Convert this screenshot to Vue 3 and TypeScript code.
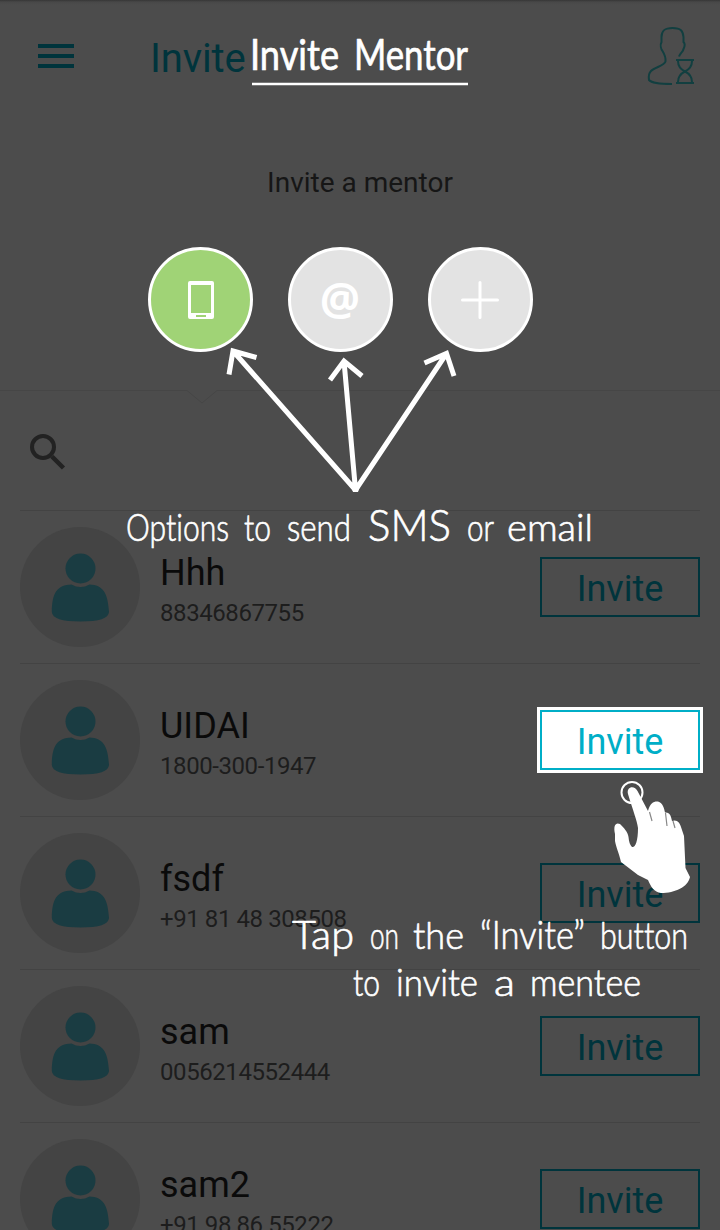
<script setup lang="ts">
interface Contact {
  name: string
  phone: string
  highlighted?: boolean
}
interface Word {
  text: string
  x: number
  y: number
  width: number
  size: number
  bold?: boolean
}

const contacts: Contact[] = [
  { name: 'Hhh', phone: '88346867755' },
  { name: 'UIDAI', phone: '1800-300-1947', highlighted: true },
  { name: 'fsdf', phone: '+91 81 48 308508' },
  { name: 'sam', phone: '0056214552444' },
  { name: 'sam2', phone: '+91 98 86 55222' },
]

const words: Word[] = [
  { text: 'Invite', x: 250, y: 70, width: 89, size: 42, bold: true },
  { text: 'Mentor', x: 354, y: 70, width: 114, size: 42, bold: true },
  { text: 'Options', x: 126, y: 541, width: 103, size: 38 },
  { text: 'to', x: 244, y: 541, width: 27, size: 38 },
  { text: 'send', x: 287, y: 541, width: 64, size: 38 },
  { text: 'SMS', x: 368, y: 541, width: 83, size: 44 },
  { text: 'or', x: 467, y: 541, width: 27, size: 38 },
  { text: 'email', x: 507, y: 541, width: 86, size: 38 },
  { text: 'Tap', x: 292, y: 949, width: 62, size: 39 },
  { text: 'on', x: 370, y: 949, width: 29, size: 38 },
  { text: 'the', x: 413, y: 949, width: 51, size: 38 },
  { text: '“Invite”', x: 480, y: 949, width: 105, size: 40 },
  { text: 'button', x: 600, y: 949, width: 88, size: 38 },
  { text: 'to', x: 353, y: 996, width: 27, size: 38 },
  { text: 'invite', x: 396, y: 996, width: 82, size: 38 },
  { text: 'a', x: 494, y: 996, width: 21, size: 38 },
  { text: 'mentee', x: 530, y: 996, width: 111, size: 38 },
]
</script>

<template>
  <main class="screen">
    <header class="topbar">
      <div class="menu"><i></i><i></i><i></i></div>
      <h1>Invite</h1>
      <svg class="pending" width="50" height="62" viewBox="646 26 50 62">
        <path d="M679 56.500C680 53 683 52 683.500 49C685 46 684.500 43 683.500 42V37C683 31 681 28 672.500 28C664 28 661.500 31 661.500 37V42C660 45 661 49 662.500 51C665 55 666 57 665.500 61.500C664 66 655 67 651 71C648 74 648.500 77 649 80C652 83.500 662 84 672 84" />
        <path d="M676 60H694M676 83H694M678 61C678 67 681 69.500 685 71.500C689 69.500 692 67 692 61M678 82C678 76 681 73.500 685 71.500C689 73.500 692 76 692 82" />
      </svg>
    </header>

    <section class="options">
      <p>Invite a mentor</p>
      <div class="circles">
        <div class="circle active">
          <svg width="26" height="38" viewBox="0 0 26 38">
            <path fill="#fff" fill-rule="evenodd" d="M2 0H24Q26 0 26 2V36Q26 38 24 38H2Q0 38 0 36V2Q0 0 2 0ZM3 4V32H23V4ZM8 34V36H18V34Z" />
          </svg>
        </div>
        <div class="circle"><span class="at">@</span></div>
        <div class="circle">
          <svg width="38" height="38" viewBox="0 0 38 38">
            <path d="M19 1.500V36.500M1.500 19H36.500" stroke="#fff" stroke-width="3" stroke-linecap="round" />
          </svg>
        </div>
      </div>
      <svg class="notch" width="720" height="16" viewBox="0 0 720 16">
        <path d="M0 .5H187L202 13L217 .5H720" fill="none" stroke="#464646" />
      </svg>
    </section>

    <div class="search">
      <svg width="36" height="36" viewBox="0 0 36 36">
        <circle cx="13" cy="13" r="11" fill="none" stroke="#222" stroke-width="4" />
        <path d="M22 22.500L33.500 34" stroke="#222" stroke-width="4.500" />
      </svg>
    </div>

    <ul class="contacts">
      <li v-for="c in contacts" :key="c.name">
        <div class="avatar">
          <svg width="58" height="70" viewBox="0 0 58 70">
            <circle cx="29.500" cy="15.500" r="15" />
            <path d="M20.500 31.500Q29.500 36.500 38.500 31.500C52 32 57 40 58 59Q57.500 68.500 29.500 68.500T.8 59C1 40 6 32 20.500 31.500Z" />
          </svg>
        </div>
        <div class="who">
          <strong>{{ c.name }}</strong>
          <span>{{ c.phone }}</span>
        </div>
        <button :class="{ highlighted: c.highlighted }" type="button">Invite</button>
      </li>
    </ul>

    <svg class="guide" width="720" height="1230" viewBox="0 0 720 1230">
      <path class="rule" d="M252 84H468" />
      <path class="arrows" d="M355.500 490L233 351M229 374.500L233 351L256.500 357.500M355.500 490L344 361M330 380L344 361L362 376M355.500 490L446.500 353.500M424.500 363L446.500 353.500L454 376" />
      <path fill="#fff" d="M351 486L360 486L358 492H353Z" />
      <text
        v-for="(w, i) in words"
        :key="i"
        :x="w.x"
        :y="w.y"
        :font-size="w.size"
        :textLength="w.width"
        :class="{ bold: w.bold }"
        lengthAdjust="spacingAndGlyphs"
      >{{ w.text }}</text>
      <g>
        <circle cx="632" cy="792.500" r="10.500" fill="none" stroke="#fff" stroke-width="2" />
        <path fill="#fff" d="M628 794C626 786 635 785 637.500 791L648 811C650 803 654 801 658 801.500C663 803 664 808 665 812.500C670 812 671 816 672 821C677 819 680 823 681 827L684 836L685.500 868L690 877C688 887 675 893 661 893C654 892 651 887 648 880L638 875L621 862C619 853 616 847 615 841V834C613 825 616 822 620 824C624 828 628 832 628.500 837C629 842 630 845 632 847C635 848 638 842 638 828C637 820 633 811 628 794Z" />
        <path d="M649.500 812L652 821M665.500 813L667 826M673 821L675 828" fill="none" stroke="#888" stroke-width="1.200" />
      </g>
    </svg>
  </main>
</template>

<style>
body { margin: 0; }
</style>

<style scoped>
.screen {
  position: relative;
  box-sizing: border-box;
  width: 720px;
  height: 1230px;
  overflow: hidden;
  background: linear-gradient(#363636, #484848 2px, #4c4c4c 5px);
  font-family: Roboto, "Liberation Sans", sans-serif;
}
.topbar { display: flex; height: 114px; box-sizing: border-box; padding: 26px 24px 0 38px; }
.menu { display: grid; width: 36px; height: 24px; margin-top: 18px; align-content: space-between; }
.menu i { height: 4px; background: #00343c; }
h1 { margin: 9px 0 0 76px; font-size: 40px; line-height: 48px; font-weight: 400; letter-spacing: -.15px; color: #00343c; }
.pending { margin-left: auto; fill: none; stroke: #123f40; stroke-width: 2; }
.options { height: 276px; box-sizing: border-box; padding-top: 51px; }
.options p { margin: 0; font-size: 28px; line-height: 36px; text-align: center; color: #161616; }
.circles { display: flex; gap: 35px; margin: 46px 0 0 147.500px; }
.circle {
  display: flex;
  align-items: center;
  justify-content: center;
  box-sizing: border-box;
  width: 105px;
  height: 105px;
  border: 3px solid #fff;
  border-radius: 50%;
  background: #e3e3e3;
}
.circle.active { background: #a0d376; }
.circle.active svg { margin-left: 2px; }
.circle svg { display: block; }
.at { margin-top: -3px; color: #fff; font: 700 45px/44px "Open Sans", sans-serif; }
.notch { display: block; margin-top: 38px; }
.search { height: 120px; box-sizing: border-box; padding: 44px 0 0 30px; }
.contacts { margin: 0 20px; padding: 0; list-style: none; }
li { display: flex; height: 153px; box-sizing: border-box; border-top: 1px solid #434343; padding-top: 16px; }
.avatar { display: flex; justify-content: center; width: 120px; height: 120px; border-radius: 50%; background: #444; }
.avatar svg { margin: 26px 0 0; fill: #1a3c42; }
.who { display: flex; flex-direction: column; margin: 25px 0 0 20px; }
.who strong { font-size: 36px; line-height: 43px; font-weight: 400; color: #0a0a0a; }
.who span { margin-top: 3px; font-size: 24px; line-height: 30px; letter-spacing: -.42px; color: #1d1d1d; }
button {
  width: 160px;
  height: 60px;
  box-sizing: border-box;
  margin: 30px 0 0 auto;
  padding: 4px 0 0;
  border: 2px solid #00343c;
  background: transparent;
  color: #00343c;
  font: 400 36px/52px Roboto, sans-serif;
}
button.highlighted { border-color: #00aec7; background: #fff; color: #00aec7; box-shadow: 0 0 0 3px #fff; }
.guide { position: absolute; inset: 0; }
.guide text { fill: #fff; font-family: Lato, "Open Sans", sans-serif; font-weight: 300; font-variant-ligatures: none; stroke: #fff; stroke-width: .7px; stroke-linejoin: round; }
.guide text.bold { font-weight: 400; }
.rule { stroke: #fff; stroke-width: 2.5; }
.arrows { fill: none; stroke: #fff; stroke-width: 5; }
</style>
